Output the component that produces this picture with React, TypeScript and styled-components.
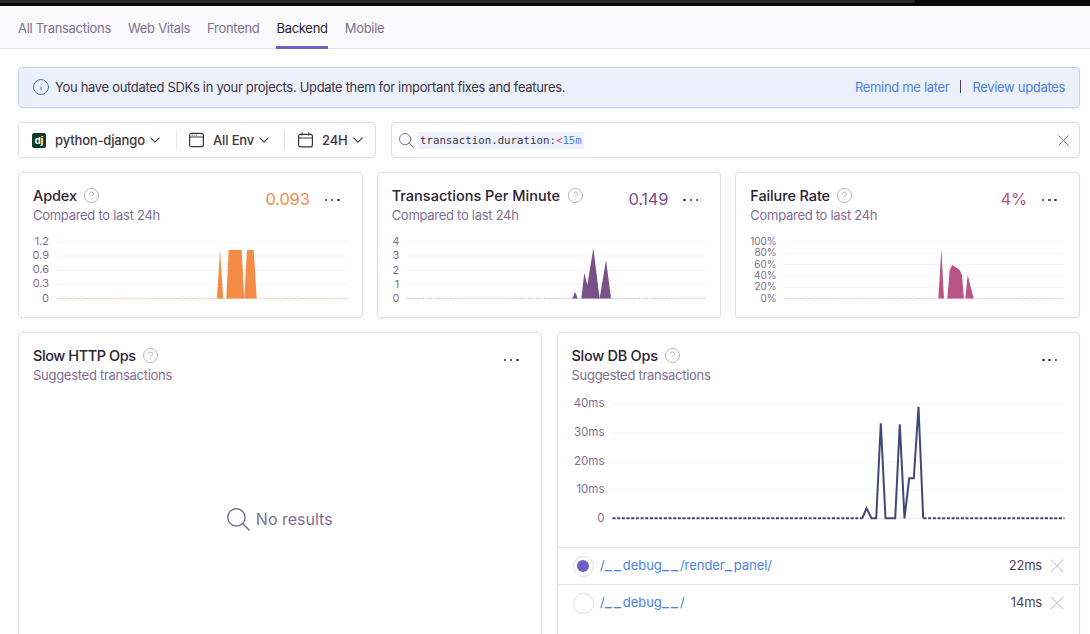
import React from 'react';
import styled, { createGlobalStyle } from 'styled-components';
import { Info, CircleHelp, X } from 'lucide-react';

const Global = createGlobalStyle`
  html, body { margin: 0; padding: 0; background: #fff; }
  body { font-family: Inter, "Liberation Sans", sans-serif; color: #2b2233; }
  * { box-sizing: border-box; }
`;

const Page = styled.div`
  width: 1090px;
  height: 634px;
  overflow: hidden;
  display: flex;
  flex-direction: column;
`;
const TopBar = styled.div`
  height: 6px;
  flex: none;
  background: #0a0a0a;
`;
const TopBarTab = styled.div`
  width: 915px;
  height: 3px;
  background: #2c2c2c;
  border-bottom-right-radius: 3px;
`;
const TabBar = styled.nav`
  height: 43px;
  flex: none;
  display: flex;
  gap: 17px;
  padding-left: 18px;
  background: #faf9fb;
  border-bottom: 1px solid #e2dee6;
`;
const Tab = styled.a<{ $active?: boolean }>`
  height: 43px;
  display: flex;
  align-items: center;
  padding-top: 4px;
  font-size: 13px;
  letter-spacing: -0.3px;
  color: ${(p) => (p.$active ? '#2b2233' : '#80708f')};
  border-bottom: 3px solid ${(p) => (p.$active ? '#6c5fc7' : 'transparent')};
`;
const Main = styled.main`
  padding: 18px 10px 0 18px;
  display: flex;
  flex-direction: column;
  gap: 14px;
`;
const Alert = styled.div`
  height: 41px;
  display: flex;
  align-items: center;
  padding: 0 14px 2px 12.5px;
  background: #ebf0fb;
  border: 1px solid #bfd2f5;
  border-radius: 4px;
  font-size: 13px;
  letter-spacing: -0.32px;
  color: #3e3446;
`;
const AlertText = styled.span`
  margin-left: 5.5px;
  flex: 1;
`;
const AlertAction = styled.a`
  color: #4d82e3;
`;
const AlertDivider = styled.span`
  width: 1px;
  height: 13px;
  margin: 0 11px;
  background: #4d4158;
`;
const FilterRow = styled.div`
  display: flex;
  gap: 15px;
  height: 36px;
`;
const FilterGroup = styled.div`
  width: 358px;
  flex: none;
  display: flex;
  align-items: center;
  background: #fff;
  border: 1px solid #e2dee6;
  border-radius: 4px;
`;
const FilterItem = styled.div<{ $w: number; $pl: number; $sep?: boolean }>`
  width: ${(p) => p.$w}px;
  height: 18px;
  display: flex;
  align-items: center;
  padding-left: ${(p) => p.$pl}px;
  border-right: ${(p) => (p.$sep ? '1px solid #e8e5ea' : 'none')};
  font-size: 13px;
  font-weight: 500;
  letter-spacing: -0.15px;
  color: #3e3446;
`;
const FilterLabel = styled.span`
  margin: -1px 5px 0 9px;
`;
const DjBadge = styled.span`
  width: 14px;
  height: 15px;
  display: flex;
  align-items: center;
  justify-content: center;
  background: #0c3c26;
  border-radius: 2px;
  color: #fff;
  font-size: 9.5px;
  font-weight: 700;
`;
const SearchBox = styled.div`
  flex: 1;
  display: flex;
  align-items: center;
  padding: 0 6px 0 6.7px;
  background: #fff;
  border: 1px solid #e2dee6;
  border-radius: 4px;
  color: #80708f;
`;
const Token = styled.span`
  margin-left: 4.3px;
  flex: none;
  height: 17px;
  padding: 0 2px;
  display: flex;
  align-items: center;
  background: #ecf1fb;
  border-radius: 2px;
  font-family: "DejaVu Sans Mono", "Liberation Mono", monospace;
  font-size: 10.75px;
  font-weight: 500;
  color: #3e3446;
`;
const TokenOp = styled.span`
  color: #e1398f;
`;
const TokenValue = styled.span`
  color: #4d82e3;
`;
const SearchSpacer = styled.span`
  flex: 1;
`;
const CardGrid = styled.section<{ $cols: number; $gap: number }>`
  display: grid;
  grid-template-columns: repeat(${(p) => p.$cols}, 1fr);
  gap: ${(p) => p.$gap}px;
`;
const Card = styled.article<{ $h: number }>`
  height: ${(p) => p.$h}px;
  display: flex;
  flex-direction: column;
  background: #fff;
  border: 1px solid #e2dee6;
  border-radius: 4px;
  box-shadow: 0 1px 2px rgba(43, 34, 51, 0.04);
`;
const CardHead = styled.header`
  height: 59px;
  flex: none;
  display: flex;
  padding: 13px 22px 0 14px;
`;
const TitleCol = styled.div`
  flex: 1;
  min-width: 0;
`;
const Title = styled.h3<{ $track?: number }>`
  margin: 0;
  height: 18px;
  display: flex;
  align-items: center;
  gap: 6.5px;
  font-size: 14.5px;
  font-weight: 500;
  letter-spacing: ${(p) => p.$track ?? -0.12}px;
  color: #2b2233;
`;
const Sub = styled.div`
  margin-top: 2px;
  font-size: 13px;
  line-height: 18px;
  letter-spacing: -0.28px;
  color: #80708f;
`;
const HelpIcon = styled(CircleHelp)`
  color: #a79db0;
  flex: none;
`;
const Value = styled.div<{ $color: string }>`
  margin-top: 3px;
  margin-right: 15px;
  font-size: 16.5px;
  line-height: 20px;
  letter-spacing: -0.2px;
  color: ${(p) => p.$color};
`;
const Dots = styled.div`
  width: 15px;
  height: 20px;
  margin-top: 4px;
  display: flex;
  align-items: center;
  justify-content: space-between;
  flex: none;
`;
const Dot = styled.i`
  width: 2.5px;
  height: 2.5px;
  border-radius: 50%;
  background: #3e3446;
`;
const ChartSvg = styled.svg<{ $h: number }>`
  display: block;
  width: 100%;
  height: ${(p) => p.$h}px;
  flex: none;
`;
const AxisText = styled.text<{ $size: number }>`
  font-size: ${(p) => p.$size}px;
  fill: #80708f;
  text-anchor: end;
  dominant-baseline: central;
`;
const EmptyBody = styled.div`
  flex: 1;
  display: flex;
  align-items: center;
  justify-content: center;
  gap: 6px;
  padding-bottom: 5px;
  font-size: 16px;
  color: #80708f;
`;
const Row = styled.div`
  height: 37px;
  flex: none;
  display: flex;
  align-items: center;
  padding: 0 10px 0 15px;
  border-top: 1px solid #e2dee6;
`;
const Radio = styled.span`
  width: 21px;
  height: 21px;
  flex: none;
  display: flex;
  align-items: center;
  justify-content: center;
  border: 1px solid #e2dee6;
  border-radius: 50%;
`;
const RadioDot = styled.span`
  width: 12px;
  height: 12px;
  border-radius: 50%;
  background: #6c5fc7;
`;
const RowLink = styled.a`
  flex: 1;
  margin: -2px 0 0 6.5px;
  font-size: 13px;
  line-height: 18px;
  letter-spacing: -0.05px;
  color: #4d82e3;
`;
const Underscore = styled.span`
  font-size: 16px;
  line-height: 0;
  letter-spacing: 1.8px;
`;
const RowTime = styled.span`
  margin-top: -2px;
  font-size: 13px;
  letter-spacing: -0.2px;
  color: #4d4158;
`;
const RowClose = styled(X)`
  margin-left: 3px;
  color: #d3ced8;
  flex: none;
`;

type Tick = { label: string; y: number };
type ChartProps = {
  x0: number;
  y0: number;
  w: number;
  h: number;
  ticks: Tick[];
  labelX: number;
  labelSize?: number;
  gridFrom: number;
  gridTo: number;
  base: number;
  baseColor: string;
  fill?: string;
  shapes?: string[];
  line?: string;
  lineColor?: string;
};

const Chart = ({ x0, y0, w, h, ticks, labelX, labelSize = 11, gridFrom, gridTo, base, baseColor, fill, shapes, line, lineColor }: ChartProps) => (
  <ChartSvg $h={h} viewBox={`${x0} ${y0} ${w} ${h}`} preserveAspectRatio="xMinYMin meet">
    {ticks.map((t, i) => (
      <g key={t.label}>
        <AxisText $size={labelSize} x={labelX} y={t.y}>{t.label}</AxisText>
        {i < ticks.length - 1 && <line x1={gridFrom} x2={gridTo} y1={t.y + 1} y2={t.y + 1} stroke="#f4f2f6" />}
      </g>
    ))}
    <line x1={gridFrom} x2={gridTo} y1={base} y2={base} stroke={baseColor} strokeDasharray="1.5 1.2" />
    {shapes?.map((d) => <path key={d} d={d} fill={fill} />)}
    {line && (
      <>
        <path d={`M612 ${base}H862`} fill="none" stroke={lineColor} strokeWidth="2" strokeDasharray="3 1.67" />
        <path d={`M923 ${base}H1064`} fill="none" stroke={lineColor} strokeWidth="2" strokeDasharray="3 1.67" />
        <path d={line} fill="none" stroke={lineColor} strokeWidth="2" strokeLinejoin="miter" />
      </>
    )}
  </ChartSvg>
);

const Chevron = () => (
  <svg width="10" height="6" viewBox="0 0 10 6" fill="none" stroke="#3e3446" strokeWidth="1.1">
    <path d="M.5.7 5 5.2 9.5.7" />
  </svg>
);
const WindowIcon = () => (
  <svg width="15" height="16" viewBox="0 0 15 16" fill="none" stroke="#3e3446" strokeWidth="1.2">
    <rect x=".6" y="1.3" width="13.8" height="13.4" rx="2" />
    <path d="M.6 5h13.8M2.8 3.2h.8M4.8 3.2h.8M6.8 3.2h.8" />
  </svg>
);
const CalendarIcon = () => (
  <svg width="15" height="16" viewBox="0 0 15 16" fill="none" stroke="#3e3446" strokeWidth="1.2">
    <rect x=".6" y="2.3" width="13.8" height="12.6" rx="2" />
    <path d="M.6 6h13.8M4.2.6v3M10.8.6v3" />
  </svg>
);
const SearchSvg = styled.svg`
  flex: none;
`;
const SearchIcon = ({ size }: { size: number }) => (
  <SearchSvg width={size} height={size} viewBox="0 0 24 24" fill="none" stroke="currentColor" strokeWidth="1.6" strokeLinecap="round">
    <circle cx="9.8" cy="9.8" r="9" />
    <path d="M16.2 16.2 23 23" />
  </SearchSvg>
);
const CardMenu = () => (
  <Dots><Dot /><Dot /><Dot /></Dots>
);
const Help = () => <HelpIcon size={17} strokeWidth={1.1} />;
const PathText = ({ text }: { text: string }) => (
  <>
    {text.split(/(_+)/).map((part, i) =>
      part.startsWith('_') ? <Underscore key={i}>{part}</Underscore> : part
    )}
  </>
);

const tabs = ['All Transactions', 'Web Vitals', 'Frontend', 'Backend', 'Mobile'];

export default function App() {
  return (
    <Page>
      <Global />
      <TopBar><TopBarTab /></TopBar>
      <TabBar>
        {tabs.map((t) => <Tab key={t} $active={t === 'Backend'}>{t}</Tab>)}
      </TabBar>
      <Main>
        <Alert>
          <Info size={18} color="#3d74db" strokeWidth={1.3} />
          <AlertText>You have outdated SDKs in your projects. Update them for important fixes and features.</AlertText>
          <AlertAction>Remind me later</AlertAction>
          <AlertDivider />
          <AlertAction>Review updates</AlertAction>
        </Alert>
        <FilterRow>
          <FilterGroup>
            <FilterItem $w={158} $pl={13} $sep>
              <DjBadge>dj</DjBadge>
              <FilterLabel>python-django</FilterLabel>
              <Chevron />
            </FilterItem>
            <FilterItem $w={108} $pl={12} $sep>
              <WindowIcon />
              <FilterLabel>All Env</FilterLabel>
              <Chevron />
            </FilterItem>
            <FilterItem $w={90} $pl={13}>
              <CalendarIcon />
              <FilterLabel>24H</FilterLabel>
              <Chevron />
            </FilterItem>
          </FilterGroup>
          <SearchBox>
            <SearchIcon size={15} />
            <Token>transaction.duration:<TokenOp>&lt;</TokenOp><TokenValue>15m</TokenValue></Token>
            <SearchSpacer />
            <X size={19} strokeWidth={1.2} />
          </SearchBox>
        </FilterRow>
        <CardGrid $cols={3} $gap={14}>
          <Card $h={146}>
            <CardHead>
              <TitleCol>
                <Title>Apdex <Help /></Title>
                <Sub>Compared to last 24h</Sub>
              </TitleCol>
              <Value $color="#f58c46">0.093</Value>
              <CardMenu />
            </CardHead>
            <Chart
              x0={19} y0={232} w={342.67} h={76}
              labelX={49} gridFrom={57} gridTo={347} base={298.4} baseColor="#f3b99a"
              ticks={[{ label: '1.2', y: 241 }, { label: '0.9', y: 255 }, { label: '0.6', y: 269.5 }, { label: '0.3', y: 283.5 }, { label: '0', y: 298 }]}
              fill="#f58c46"
              shapes={[
                'M217 298.5 220 250 223.2 298.5Z',
                'M226.3 298.5 228.7 250H241.7L244.3 298.5Z',
                'M244.3 298.5 247 250H253.7L256.7 298.5Z',
              ]}
            />
          </Card>
          <Card $h={146}>
            <CardHead>
              <TitleCol>
                <Title $track={0.01}>Transactions Per Minute <Help /></Title>
                <Sub>Compared to last 24h</Sub>
              </TitleCol>
              <Value $color="#7a5088">0.149</Value>
              <CardMenu />
            </CardHead>
            <Chart
              x0={377.67} y0={232} w={342.67} h={76}
              labelX={399} gridFrom={406} gridTo={705.6} base={298.4} baseColor="#c9b6d2"
              ticks={[{ label: '4', y: 241 }, { label: '3', y: 255 }, { label: '2', y: 269.5 }, { label: '1', y: 283.5 }, { label: '0', y: 298 }]}
              fill="#7a5088"
              shapes={[
                'M572 298.5 574.7 291.7 577.3 298.5Z',
                'M581 298.5 584 273 587 285 593 248.3 599.3 298.5 605.7 260 610.7 298.5Z',
              ]}
            />
          </Card>
          <Card $h={146}>
            <CardHead>
              <TitleCol>
                <Title>Failure Rate <Help /></Title>
                <Sub>Compared to last 24h</Sub>
              </TitleCol>
              <Value $color="#b85586">4%</Value>
              <CardMenu />
            </CardHead>
            <Chart
              x0={736.33} y0={232} w={342.67} h={76}
              labelX={777} labelSize={10} gridFrom={784} gridTo={1064} base={298.4} baseColor="#e6b9cf"
              ticks={[{ label: '100%', y: 241 }, { label: '80%', y: 252.3 }, { label: '60%', y: 263.6 }, { label: '40%', y: 275 }, { label: '20%', y: 286.3 }, { label: '0%', y: 298 }]}
              fill="#b85586"
              shapes={[
                'M938.7 298.5 941.7 249 944.3 298.5Z',
                'M947.7 298.5 950 270 952.7 265 960 270 962.3 275 964.3 298.5Z',
                'M965.7 298.5 968 275 974 298.5Z',
              ]}
            />
          </Card>
        </CardGrid>
        <CardGrid $cols={2} $gap={15}>
          <Card $h={320}>
            <CardHead>
              <TitleCol>
                <Title $track={-0.42}>Slow HTTP Ops <Help /></Title>
                <Sub>Suggested transactions</Sub>
              </TitleCol>
              <CardMenu />
            </CardHead>
            <EmptyBody>
              <SearchIcon size={23} />
              No results
            </EmptyBody>
          </Card>
          <Card $h={320}>
            <CardHead>
              <TitleCol>
                <Title $track={-0.27}>Slow DB Ops <Help /></Title>
                <Sub>Suggested transactions</Sub>
              </TitleCol>
              <CardMenu />
            </CardHead>
            <Chart
              x0={557.5} y0={392} w={521.5} h={155}
              labelX={604} labelSize={11.5} gridFrom={611} gridTo={1064} base={518.3} baseColor="#d8d5e3"
              ticks={[{ label: '40ms', y: 403 }, { label: '30ms', y: 432 }, { label: '20ms', y: 461 }, { label: '10ms', y: 489 }, { label: '0', y: 518 }]}
              line="M861.7 518.3 866 508.3 871 518.3H875.7L880.3 423.3 885 518.3H894.7L899.3 424.3 904 518.3 908.7 478.3H913.3L918 406.7 922.7 518.3"
              lineColor="#444674"
            />
            <Row>
              <Radio><RadioDot /></Radio>
              <RowLink><PathText text="/__debug__/render_panel/" /></RowLink>
              <RowTime>22ms</RowTime>
              <RowClose size={24} strokeWidth={1.1} />
            </Row>
            <Row>
              <Radio />
              <RowLink><PathText text="/__debug__/" /></RowLink>
              <RowTime>14ms</RowTime>
              <RowClose size={24} strokeWidth={1.1} />
            </Row>
          </Card>
        </CardGrid>
      </Main>
    </Page>
  );
}
